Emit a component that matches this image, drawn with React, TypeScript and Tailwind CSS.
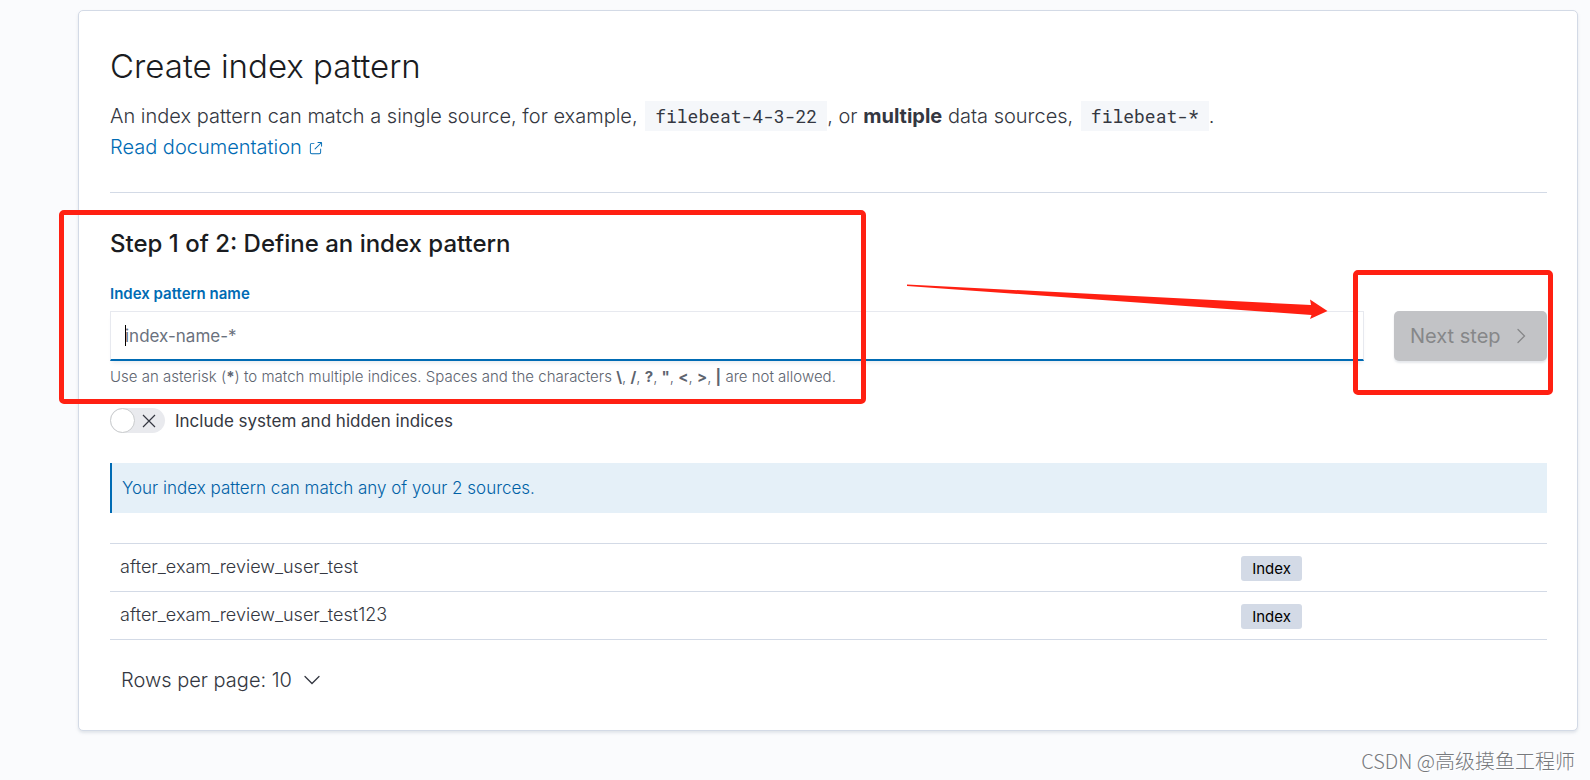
import { useState } from 'react';

interface Source {
  name: string;
  type: string;
}

const sources: Source[] = [
  { name: 'after_exam_review_user_test', type: 'Index' },
  { name: 'after_exam_review_user_test123', type: 'Index' },
];

const FORBIDDEN = ['\\', '/', '?', '"', '<', '>', '|'];

function Code({ children }: { children: string }) {
  return (
    <code className="ml-[2px] inline-block bg-[#f5f7fa] px-[10px] font-['Roboto_Mono','DejaVu_Sans_Mono',monospace] text-lg leading-[30px] font-normal">
      {children}
    </code>
  );
}

function PopoutIcon() {
  return (
    <svg viewBox="0 0 16 16" fill="currentColor" className="inline-block h-[15px] w-[15px]">
      <path d="M13 8.5a.5.5 0 1 1 1 0V12a2 2 0 0 1-2 2H4a2 2 0 0 1-2-2V4a2 2 0 0 1 2-2h2.500a.5.5 0 0 1 0 1H4a1 1 0 0 0-1 1v8a1 1 0 0 0 1 1h8a1 1 0 0 0 1-1V8.500zm-5.120.339a.5.5 0 1 1-.706-.707L13.305 2H10.500a.5.5 0 1 1 0-1H14a1 1 0 0 1 1 1v3.500a.5.5 0 1 1-1 0V2.720L7.880 8.839z" />
    </svg>
  );
}

function Annotations() {
  return (
    <>
      <div className="pointer-events-none absolute top-[199px] left-[-20px] h-[194px] w-[807px] rounded-[5px] border-5 border-[#ff2012]" />
      <svg
        viewBox="0 0 421 36"
        className="pointer-events-none absolute top-[273px] right-[249px] h-9 w-[421px]"
        fill="#ff2012"
      >
        <path d="M0 .5 L404 21 L403 15.500 L420.500 27 L403 35 L404.500 31 L0 2 Z" />
      </svg>
      <div className="pointer-events-none absolute top-[259px] right-6 h-[125px] w-[200px] rounded-[5px] border-5 border-[#ff2012]" />
    </>
  );
}

export default function App() {
  const [pattern, setPattern] = useState('');
  const [includeHidden, setIncludeHidden] = useState(false);

  return (
    <div className="min-h-screen bg-[#fafbfd] pt-[10px] pr-3 pl-[78px] font-['Inter','Noto_Sans_CJK_SC',sans-serif] text-[#343741]">
      <main className="relative rounded-[5px] border border-[#d3dae6] bg-white pt-[35px] pr-[30px] pb-[35px] pl-[31px] shadow-[0_2px_3px_rgba(152,162,179,0.25)]">
        <h1 className="text-[33px] leading-10 font-light text-[#1a1c21]">Create index pattern</h1>

        <p className="mt-[15px] border-b border-[#d3dae6] pb-[29px] text-xl leading-[31px] font-light">
          An index pattern can match a single source, for example, <Code>filebeat-4-3-22</Code>, or{' '}
          <strong className="font-bold">multiple</strong> data sources, <Code>filebeat-*</Code>.
          <br />
          <a href="#docs" className="text-[#006bb4]">
            Read documentation <PopoutIcon />
          </a>
        </p>

        <h2 className="mt-[35px] text-2xl leading-8 font-medium text-[#1a1c21]">
          Step 1 of 2: Define an index pattern
        </h2>

        <form className="mt-[23px]" onSubmit={(e) => e.preventDefault()}>
          <label htmlFor="pattern" className="block text-[15px] leading-[22px] font-semibold text-[#006bb4]">
            Index pattern name
          </label>
          <div className="mt-[6px] flex gap-[30px]">
            <div className="relative flex-1">
              <input
                id="pattern"
                type="text"
                placeholder="index-name-*"
                value={pattern}
                onChange={(e) => setPattern(e.target.value)}
                className="block h-[50px] w-full border border-b-2 border-[#e7e9ef] border-b-[#006bb4] px-[14px] text-[17px] shadow-[0_4px_4px_-2px_rgba(152,162,179,0.2)] outline-none placeholder:text-[#6a717d]"
              />
              <span className="absolute top-[14px] left-[15px] h-[21px] w-px bg-black" />
            </div>
            <button
              type="submit"
              disabled
              className="flex h-[50px] w-[153px] items-center gap-[10px] rounded-[5px] bg-[#c2c3c6] pl-4 text-xl text-[#868789] shadow-[0_2px_2px_rgba(152,162,179,0.25)]"
            >
              Next step
              <svg viewBox="0 0 20 20" fill="none" stroke="currentColor" className="h-5 w-5">
                <path d="M7 3.500 L13.500 10 L7 16.500" strokeWidth="1.300" strokeLinecap="round" />
              </svg>
            </button>
          </div>
          <p className="mt-[5px] text-[15px] leading-[22px] font-light text-[#5d646f]">
            Use an asterisk (<strong className="font-bold">*</strong>) to match multiple indices. Spaces and the characters{' '}
            {FORBIDDEN.map((c, i) => (
              <span key={c}>
                <strong className="font-bold">{c}</strong>
                {i < FORBIDDEN.length - 1 && ', '}
              </span>
            ))}{' '}
            are not allowed.
          </p>

          <div className="mt-5 flex h-[25px] items-center gap-[10px]">
            <button
              id="hidden-indices"
              type="button"
              role="switch"
              aria-checked={includeHidden}
              onClick={() => setIncludeHidden(!includeHidden)}
              className="flex h-[25px] w-[55px] items-center gap-[6px] rounded-full bg-[#e9eaee]"
            >
              <span className="h-[25px] w-[25px] rounded-full border border-[#c9cbcd] bg-white" />
              <svg viewBox="0 0 16 16" fill="none" stroke="currentColor" className="h-4 w-4">
                <path d="M2 2l12 12M14 2L2 14" strokeWidth="1.200" />
              </svg>
            </button>
            <label htmlFor="hidden-indices" className="text-[17px] leading-[26px]">
              Include system and hidden indices
            </label>
          </div>
        </form>

        <div className="mt-[30px] border-l-2 border-[#006bb4] bg-[#e5f0f8] py-3 pl-[10px] text-[17px] leading-[26px] font-light text-[#0061a6]">
          Your index pattern can match any of your 2 sources.
        </div>

        <table className="mt-[30px] w-full border-collapse border-y border-[#d3dae6] text-lg font-light">
          <tbody>
            {sources.map((s) => (
              <tr key={s.name} className="h-12 border-b border-[#d3dae6]">
                <td className="pb-[2px] pl-[10px]">{s.name}</td>
                <td className="w-[306px] pt-[2px]">
                  <span className="block w-[61px] rounded-[3px] bg-[#d3dae6] text-center text-[15px] leading-[25px] font-normal text-black">
                    {s.type}
                  </span>
                </td>
              </tr>
            ))}
          </tbody>
        </table>

        <button type="button" className="mt-[25px] ml-[11px] flex h-[30px] items-center gap-3 text-xl font-light">
          Rows per page: 10
          <svg viewBox="0 0 16 16" fill="none" stroke="currentColor" className="h-4 w-4">
            <path d="M1 4.500 L8 11.500 L15 4.500" strokeWidth="1.300" strokeLinecap="round" />
          </svg>
        </button>
        <Annotations />
      </main>

      <footer className="mt-4 pr-[3px] text-right font-['Noto_Sans_CJK_SC',sans-serif] text-xl leading-7 font-light text-[#77797d] [text-shadow:1px_1px_0_#fff]">
        CSDN @高级摸鱼工程师
      </footer>
    </div>
  );
}
